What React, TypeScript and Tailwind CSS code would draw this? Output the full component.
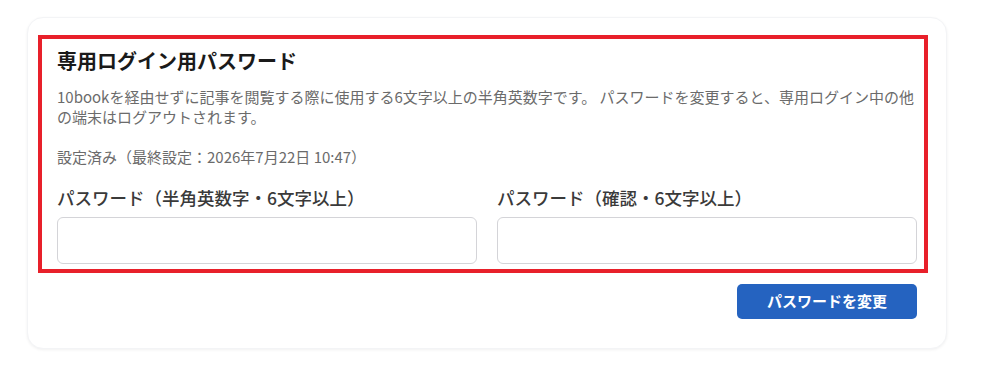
export default function App() {
  return (
    <div
      className="min-h-screen bg-white pt-[17px] pl-[27px]"
      style={{ fontFamily: '"Noto Sans CJK JP", "Noto Sans", sans-serif' }}
    >
      <div className="relative w-[920px] rounded-2xl border border-gray-100 bg-white px-[29px] pt-[29px] pb-[29px] shadow-[0_1px_3px_rgba(0,0,0,0.06)]">
        <h2 className="text-[20px] font-bold leading-7 text-[#1a1a1a]">専用ログイン用パスワード</h2>
        <p className="mt-[12px] text-[15px] leading-5 text-[#6b6b6b]">
          10bookを経由せずに記事を閲覧する際に使用する6文字以上の半角英数字です。 パスワードを変更すると、専用ログイン中の他の端末はログアウトされます。
        </p>
        <p className="mt-[20px] text-[15px] leading-5 text-[#6b6b6b]">設定済み（最終設定：2026年7月22日 10:47）</p>

        <div className="mt-[19px] grid grid-cols-2 gap-5">
          <div className="flex flex-col gap-[7px]">
            <label className="text-[17.5px] font-medium leading-6 text-[#3a3a3a]">パスワード（半角英数字・6文字以上）</label>
            <input
              type="password"
              className="h-[47px] w-full rounded-md border border-[#d4d4d8] bg-white px-3 outline-none"
            />
          </div>
          <div className="flex flex-col gap-[7px]">
            <label className="text-[17.5px] font-medium leading-6 text-[#3a3a3a]">パスワード（確認・6文字以上）</label>
            <input
              type="password"
              className="h-[47px] w-full rounded-md border border-[#d4d4d8] bg-white px-3 outline-none"
            />
          </div>
        </div>

        <div className="mt-[20px] flex justify-end">
          <button className="h-[35px] w-[180px] rounded-[5px] bg-[#2563c0] text-[15px] font-bold text-white">
            パスワードを変更
          </button>
        </div>

        <div className="pointer-events-none absolute left-[10px] top-[17px] h-[238px] w-[890px] border-4 border-[#e8202a]" />
      </div>
    </div>
  )
}
